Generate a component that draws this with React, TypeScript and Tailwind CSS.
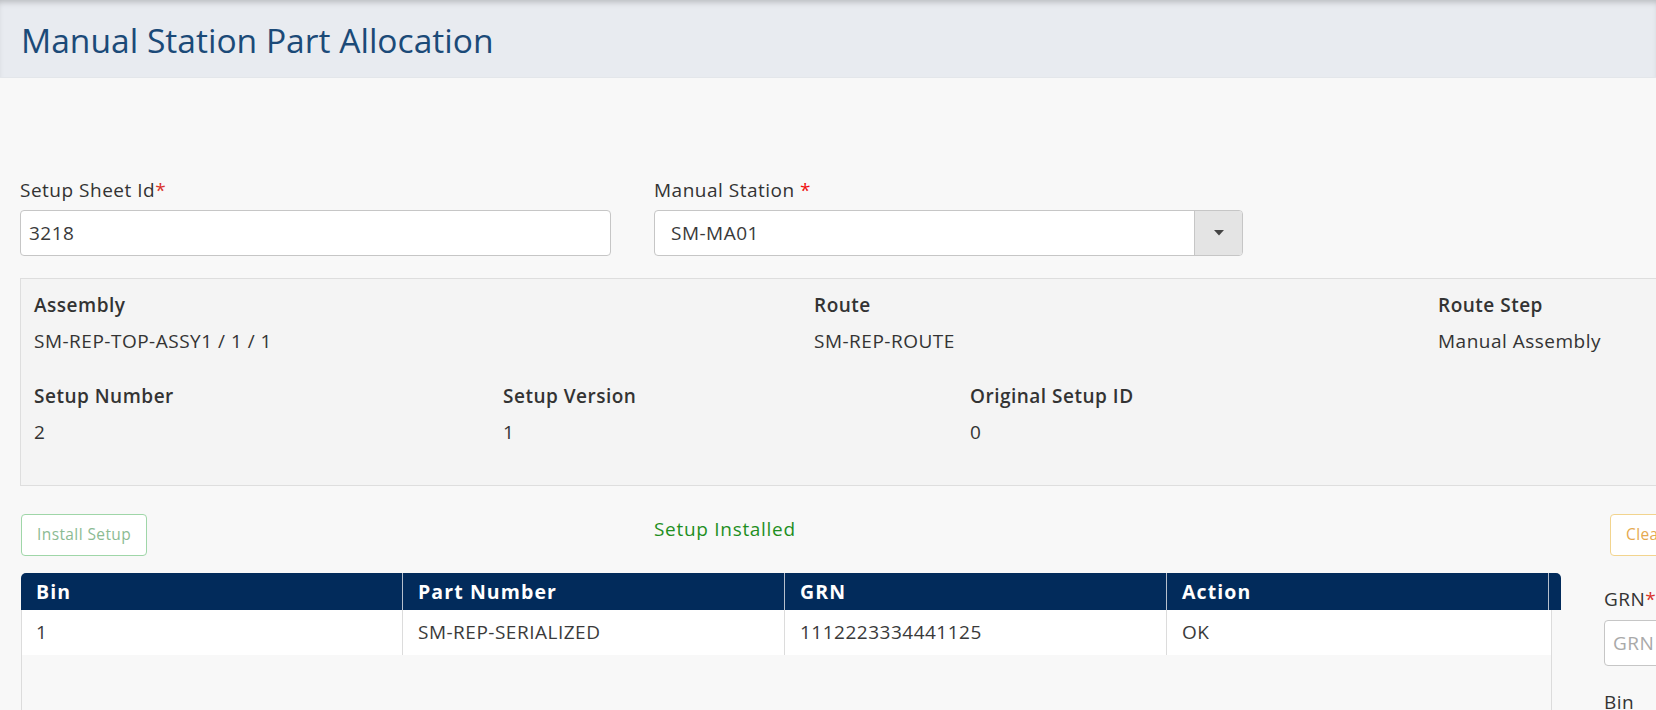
import React from "react";

function Field({ label, value }: { label: string; value: string }) {
  return (
    <div>
      <div className="font-semibold leading-[24px] text-[#333]">{label}</div>
      <div className="mt-[12px] leading-[24px] text-[#333]">{value}</div>
    </div>
  );
}

export default function App() {
  return (
    <div className="w-[1656px] h-[710px] overflow-hidden bg-[#f8f8f8] font-['Open_Sans',sans-serif] text-[#333]">
      <header className="h-[78px] bg-[#e8ebf0] shadow-[inset_0_5px_6px_-3px_rgba(0,0,0,0.22)] border-b border-[#e3e6ea] pl-[21px] pt-[23px]">
        <h1 className="text-[33.6px] leading-[34px] font-normal text-[#1b4a78] whitespace-nowrap">
          Manual Station Part Allocation
        </h1>
      </header>

      <main className="w-[1902px] ml-[5px] pt-[100px] text-[19px] tracking-[0.5px]">
        {/* top inputs */}
        <div className="flex">
          <div className="w-[634px] px-[15px]">
            <div className="leading-[24px]">
              Setup Sheet Id<span className="text-[#d9342b]">*</span>
            </div>
            <div className="mt-[8px] w-[591px] h-[46px] border border-[#c6c6c6] rounded-[4px] bg-white flex items-center pl-[8px] text-[#3a3a3a]">
              3218
            </div>
          </div>
          <div className="w-[634px] px-[15px]">
            <div className="leading-[24px]">
              Manual Station <span className="text-[#f01010]">*</span>
            </div>
            <div className="mt-[8px] w-[589px] h-[46px] flex border border-[#c6c6c6] rounded-[4px] bg-white overflow-hidden">
              <div className="flex-1 flex items-center pl-[16px] text-[#3a3a3a]">SM-MA01</div>
              <div className="w-[48px] bg-[#e4e4e4] border-l border-[#c6c6c6] flex items-center justify-center">
                <svg width="10" height="6" viewBox="0 0 10 6">
                  <polygon points="0,0 10,0 5,5.5" fill="#444" />
                </svg>
              </div>
            </div>
          </div>
        </div>

        {/* info panel */}
        <div className="mx-[15px] mt-[22px] h-[208px] border border-[#dedede] bg-[#f4f4f4] pl-[13px] pt-[14px]">
          <div className="flex">
            <div className="w-[780px]">
              <Field label="Assembly" value="SM-REP-TOP-ASSY1 / 1 / 1" />
            </div>
            <div className="w-[624px]">
              <Field label="Route" value="SM-REP-ROUTE" />
            </div>
            <div className="w-[400px]">
              <Field label="Route Step" value="Manual Assembly" />
            </div>
          </div>
          <div className="flex mt-[31px]">
            <div className="w-[469px]">
              <Field label="Setup Number" value="2" />
            </div>
            <div className="w-[467px]">
              <Field label="Setup Version" value="1" />
            </div>
            <div className="w-[467px]">
              <Field label="Original Setup ID" value="0" />
            </div>
          </div>
        </div>

        {/* lower area */}
        <div className="flex mt-[28px]">
          <div className="w-[1585px] px-[15px]">
            <div className="flex items-start h-[42px]">
              <div className="w-[634px]">
                <button className="ml-[1px] h-[42px] px-[15px] border border-[#9fd6a8] rounded-[4px] bg-white text-[#8bbb93] text-[15.5px] tracking-[0.4px] flex items-center">
                  Install Setup
                </button>
              </div>
              <div className="pt-[3px] leading-[24px] tracking-[0.7px] text-[#1f8f1f]">Setup Installed</div>
            </div>

            <div className="ml-[1px] mt-[17px] w-[1540px]">
              <div className="flex h-[37px] bg-[#022b5b] rounded-t-[5px] text-white font-bold text-[19.5px] tracking-[1.1px]">
                <div className="w-[382px] border-r border-[#b6bfcc] pl-[15px] flex items-center">Bin</div>
                <div className="w-[382px] border-r border-[#b6bfcc] pl-[15px] flex items-center">Part Number</div>
                <div className="w-[382px] border-r border-[#b6bfcc] pl-[15px] flex items-center">GRN</div>
                <div className="w-[382px] border-r border-[#b6bfcc] pl-[15px] flex items-center">Action</div>
                <div className="flex-1"></div>
              </div>
              <div className="w-[1531px] h-[160px] border-x border-[#dcdcdc] bg-[#f8f8f8]">
                <div className="flex h-[45px] bg-white text-[#3a3a3a]">
                  <div className="w-[381px] border-r border-[#dcdcdc] pl-[14px] flex items-center">1</div>
                  <div className="w-[382px] border-r border-[#dcdcdc] pl-[15px] flex items-center">SM-REP-SERIALIZED</div>
                  <div className="w-[382px] border-r border-[#dcdcdc] pl-[15px] flex items-center">1112223334441125</div>
                  <div className="flex-1 pl-[15px] flex items-center">OK</div>
                </div>
              </div>
            </div>
          </div>

          <div className="w-[317px] px-[14px]">
            <button className="ml-[6px] h-[42px] px-[15px] border border-[#f2d48e] rounded-[4px] bg-white text-[#e5a94f] text-[15.5px] tracking-[0.4px] flex items-center">
              Clear
            </button>
            <div className="mt-[31px] leading-[24px]">
              GRN<span className="text-[#d9342b]">*</span>
            </div>
            <div className="mt-[9px] h-[46px] border border-[#c6c6c6] rounded-[4px] bg-white flex items-center pl-[8px] text-[#a9a9a9]">
              GRN
            </div>
            <div className="mt-[24px] leading-[24px]">Bin</div>
          </div>
        </div>
      </main>
    </div>
  );
}
